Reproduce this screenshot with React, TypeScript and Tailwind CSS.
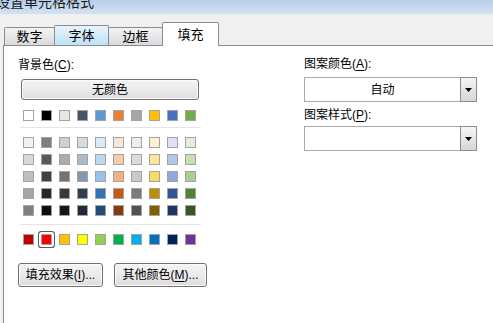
import React from 'react';

// 主题颜色：每列 = 基色 + 5 个浅/深变体
const themeColumns: string[][] = [
  ['#FFFFFF', '#F2F2F2', '#D9D9D9', '#BFBFBF', '#A6A6A6', '#808080'],
  ['#000000', '#7F7F7F', '#595959', '#404040', '#262626', '#0D0D0D'],
  ['#E7E6E6', '#D0CECE', '#AEAAAA', '#767171', '#3B3838', '#171616'],
  ['#44546A', '#D6DCE4', '#ADB9CA', '#8497B0', '#333F4F', '#222A35'],
  ['#5B9BD5', '#DDEBF7', '#BDD7EE', '#9BC2E6', '#2F75B5', '#1F4E78'],
  ['#ED7D31', '#FCE4D6', '#F8CBAD', '#F4B084', '#C65911', '#833C0B'],
  ['#A5A5A5', '#EDEDED', '#DBDBDB', '#C9C9C9', '#7B7B7B', '#525252'],
  ['#FFC000', '#FFF2CC', '#FFE699', '#FFD966', '#BF8F00', '#806000'],
  ['#4472C4', '#D9E1F2', '#B4C6E7', '#8EA9DB', '#305496', '#203764'],
  ['#70AD47', '#E2EFDA', '#C6E0B4', '#A9D08E', '#548235', '#375623'],
];

const standardColors = [
  '#C00000', '#FF0000', '#FFC000', '#FFFF00', '#92D050',
  '#00B050', '#00B0F0', '#0070C0', '#002060', '#7030A0',
];

function Swatch({ color, selected }: { color: string; selected?: boolean }) {
  return (
    <span
      className={`block h-[11px] w-[11px] border border-[#a3a3a3] ${
        selected ? 'rounded-[1px] ring-1 ring-[#5c5c5c] ring-offset-2' : ''
      }`}
      style={{ backgroundColor: color }}
    />
  );
}

function SwatchRow({ colors, selectedIndex }: { colors: string[]; selectedIndex?: number }) {
  return (
    <div className="flex gap-[7px]">
      {colors.map((c, i) => (
        <Swatch key={i} color={c} selected={i === selectedIndex} />
      ))}
    </div>
  );
}

function WinButton({ className, children }: { className: string; children: React.ReactNode }) {
  return (
    <div
      className={`flex items-center justify-center rounded-[3px] border border-[#707070] bg-linear-to-b from-[#f4f4f4] via-[#ebebeb] to-[#dcdcdc] text-[12px] leading-[16px] text-black shadow-[inset_0_0_0_1px_#fbfbfb] ${className}`}
    >
      {children}
    </div>
  );
}

function Dropdown({ value }: { value?: string }) {
  return (
    <div className="flex h-[25px] w-[173px] border border-[#a9a9a9] bg-white">
      <div className="flex flex-1 items-center justify-center text-[12px] leading-[16px] text-black">
        {value}
      </div>
      <div className="-my-px -mr-px flex w-[17px] items-center justify-center border border-[#8c8c8c] bg-linear-to-b from-[#f6f6f6] to-[#d6d6d6]">
        <svg width="7" height="4" viewBox="0 0 7 4">
          <polygon points="0,0 7,0 3.5,4" fill="#000" />
        </svg>
      </div>
    </div>
  );
}

function Tab({
  label,
  className,
}: {
  label: string;
  className: string;
}) {
  return (
    <div
      className={`flex items-center justify-center rounded-t-[2px] border border-b-0 border-[#898c95] text-[13px] leading-[16px] text-black ${className}`}
    >
      {label}
    </div>
  );
}

export default function App() {
  return (
    <div
      className="flex h-[323px] w-[493px] flex-col overflow-hidden bg-[#f0f0f0]"
      style={{ fontFamily: '"Liberation Sans", "Noto Sans CJK SC", sans-serif' }}
    >
      {/* 标题栏（被截掉上半部分） */}
      <div className="h-[14px] overflow-hidden bg-linear-to-b from-[#b8cfe9] to-[#d2e2f3]">
        <div className="-ml-[4px] -mt-[6px] text-[14px] leading-[16px] text-[#1b1b1b]">设置单元格格式</div>
      </div>

      {/* 选项卡 */}
      <div className="flex h-[31px] items-end pl-[4px]">
        <Tab label="数字" className="h-[18px] w-[51px] bg-linear-to-b from-[#f3f3f3] to-[#dadada]" />
        <Tab
          label="字体"
          className="-ml-px h-[20px] w-[55px] border-[#6aa4cf] bg-linear-to-b from-[#e6f4fc] to-[#bfe2f6]"
        />
        <Tab label="边框" className="-ml-px h-[18px] w-[55px] bg-linear-to-b from-[#f3f3f3] to-[#dadada]" />
        <Tab label="填充" className="relative z-10 -mb-px -ml-px h-[24px] w-[57px] bg-white" />
      </div>

      {/* 面板 */}
      <div className="ml-[3px] flex flex-1 border-l border-t border-[#898c95] bg-white pt-[11px]">
        {/* 左侧：背景色 */}
        <div className="ml-[14px] flex w-[190px] flex-col">
          <div className="h-[16px] text-[12px] leading-[16px] text-black">
            背景色(<span className="underline underline-offset-2">C</span>):
          </div>

          <WinButton className="ml-[3px] mt-[6px] h-[21px] w-[178px]">无颜色</WinButton>

          <div className="ml-[5px] mt-[10px]">
            <SwatchRow colors={themeColumns.map((c) => c[0])} />
          </div>

          <div className="ml-[2px] mt-[6px] h-px w-[181px] bg-[#e4e4e4]" />

          <div className="ml-[5px] mt-[9px] flex flex-col gap-[6px]">
            {[1, 2, 3, 4, 5].map((r) => (
              <SwatchRow key={r} colors={themeColumns.map((c) => c[r])} />
            ))}
          </div>

          <div className="ml-[2px] mt-[8px] h-px w-[181px] bg-[#e4e4e4]" />

          <div className="ml-[5px] mt-[9px]">
            <SwatchRow colors={standardColors} selectedIndex={1} />
          </div>

          <div className="mt-[18px] flex gap-[11px]">
            <WinButton className="h-[24px] w-[85px]">
              填充效果(<span className="underline underline-offset-2">I</span>)...
            </WinButton>
            <WinButton className="h-[24px] w-[93px]">
              其他颜色(<span className="underline underline-offset-2">M</span>)...
            </WinButton>
          </div>
        </div>

        {/* 右侧：图案 */}
        <div className="-mt-px ml-[96px] flex w-[173px] flex-col">
          <div className="h-[16px] text-[12px] leading-[16px] text-black">
            图案颜色(<span className="underline underline-offset-2">A</span>):
          </div>
          <div className="mt-[5px]">
            <Dropdown value="自动" />
          </div>
          <div className="mt-[5px] h-[16px] text-[12px] leading-[16px] text-black">
            图案样式(<span className="underline underline-offset-2">P</span>):
          </div>
          <div className="mt-[3px]">
            <Dropdown />
          </div>
        </div>
      </div>
    </div>
  );
}
